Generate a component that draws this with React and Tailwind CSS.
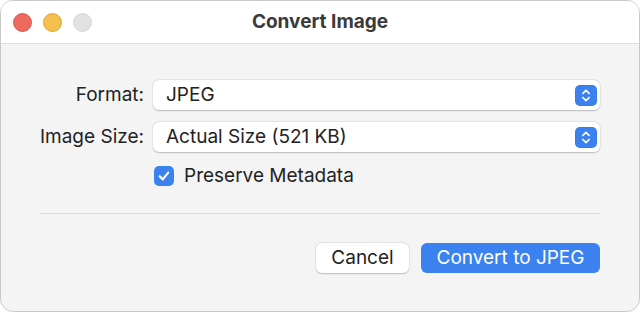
import React from 'react';

function Stepper() {
  return (
    <div className="mr-[3px] flex h-[21px] w-[22px] items-center justify-center rounded-[5px] bg-[#3b82f0] shadow-[inset_0_0_0_0.5px_rgba(0,0,0,0.1)]">
      <svg width="10" height="15" viewBox="0 0 10 15" fill="none" stroke="white" strokeWidth="1.7" strokeLinecap="round" strokeLinejoin="round">
        <path d="M1.8 5.5 L5 2.3 L8.2 5.5" />
        <path d="M1.8 9.5 L5 12.7 L8.2 9.5" />
      </svg>
    </div>
  );
}

function Select({ value }) {
  return (
    <div className="flex h-[30px] items-center justify-between rounded-[6px] bg-white pl-[13px] shadow-[0_0.5px_1.5px_rgba(0,0,0,0.22),0_0_0_0.5px_rgba(0,0,0,0.06)]">
      <span>{value}</span>
      <Stepper />
    </div>
  );
}

export default function App() {
  return (
    <div
      className="h-[312px] w-[640px] overflow-hidden rounded-[13px] border border-[#c9c9c9] bg-[#f4f4f4] text-[19px] leading-[24px] text-[#222]"
      style={{ fontFamily: 'Inter, "Liberation Sans", sans-serif' }}
    >
      <div className="relative flex h-[43px] items-center justify-center border-b border-[#dedede] bg-white">
        <div className="absolute left-[12px] top-[12px] flex gap-[11px]">
          <span className="h-[19px] w-[19px] rounded-full border border-[#d9574b] bg-[#ec6a5e]" />
          <span className="h-[19px] w-[19px] rounded-full border border-[#dca43a] bg-[#f4bf4f]" />
          <span className="h-[19px] w-[19px] rounded-full border border-[#d4d4d4] bg-[#e2e2e2]" />
        </div>
        <h1 className="text-[19px] font-bold text-[#3a3a3a]">Convert Image</h1>
      </div>

      <div className="pl-[38px] pr-[39px] pt-[36px]">
        <div className="grid grid-cols-[105px_1fr] items-center gap-x-[9px] gap-y-[12px]">
          <label className="text-right">Format:</label>
          <Select value="JPEG" />
          <label className="text-right">Image Size:</label>
          <Select value="Actual Size (521 KB)" />
          <div />
          <div className="mt-[2px] flex h-[20px] items-center gap-[10px] pl-[1px]">
            <span className="flex h-[20px] w-[20px] items-center justify-center rounded-[5px] bg-[#3b82f0]">
              <svg width="14" height="14" viewBox="0 0 14 14" fill="none" stroke="white" strokeWidth="2.2" strokeLinecap="round" strokeLinejoin="round">
                <path d="M2.8 7.4 L5.8 10.4 L11.2 3.6" />
              </svg>
            </span>
            <span>Preserve Metadata</span>
          </div>
        </div>

        <div className="mt-[27px] border-t border-[#dcdcdc]" />

        <div className="mt-[29px] flex justify-end gap-[12px]">
          <button className="h-[30px] w-[93px] rounded-[6px] bg-white text-[#222] shadow-[0_0.5px_1.5px_rgba(0,0,0,0.22),0_0_0_0.5px_rgba(0,0,0,0.06)]">
            Cancel
          </button>
          <button className="h-[30px] w-[179px] rounded-[6px] bg-[#3b82f0] text-white">
            Convert to JPEG
          </button>
        </div>
      </div>
    </div>
  );
}
